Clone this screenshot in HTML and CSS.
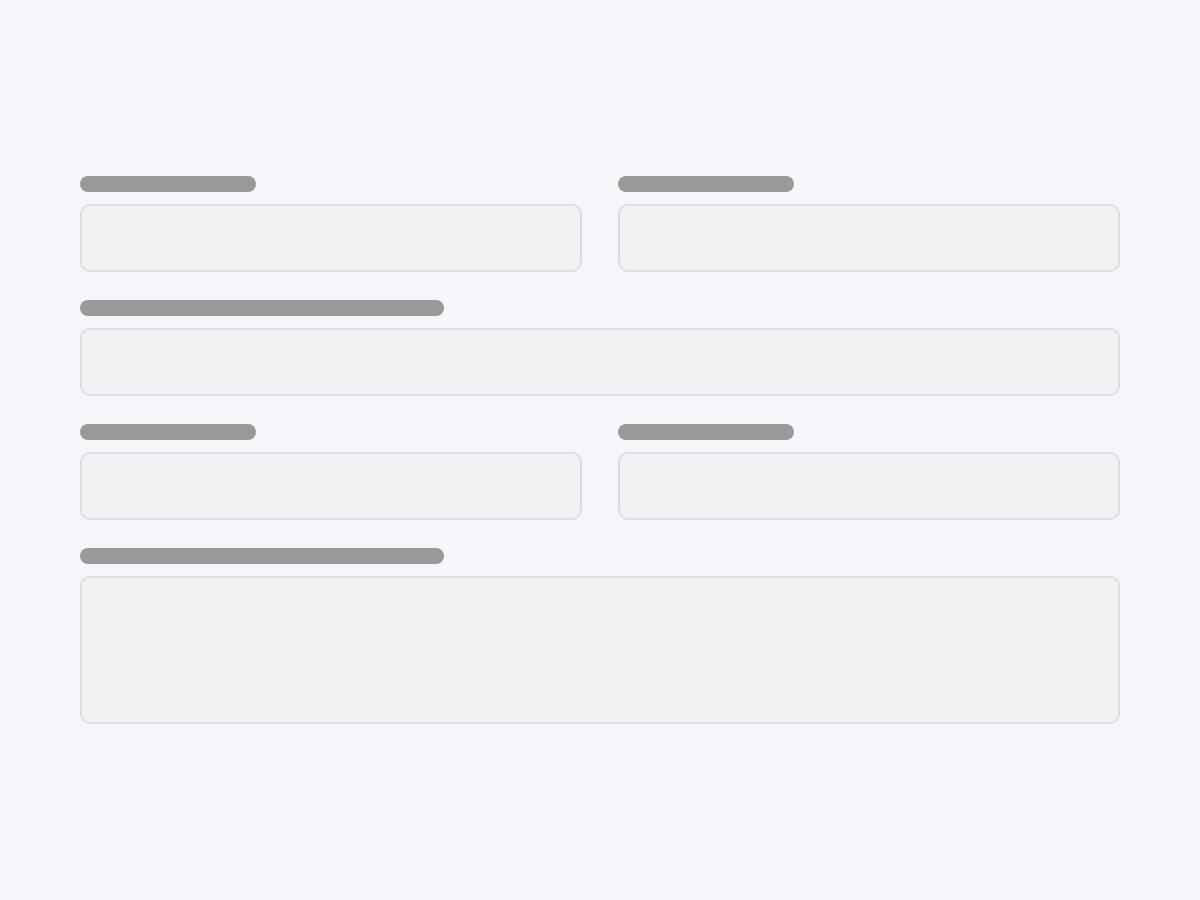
FILE: index.html
```html
<!DOCTYPE html>
<html>
<head>
<meta charset="utf-8">
<link rel="stylesheet" href="styles.css">
</head>
<body>
<form class="form">
  <div class="row two">
    <div class="field"><div class="label short"></div><div class="input"></div></div>
    <div class="field"><div class="label short"></div><div class="input"></div></div>
  </div>
  <div class="field"><div class="label long"></div><div class="input"></div></div>
  <div class="row two">
    <div class="field"><div class="label short"></div><div class="input"></div></div>
    <div class="field"><div class="label short"></div><div class="input"></div></div>
  </div>
  <div class="field"><div class="label long"></div><div class="input area"></div></div>
</form>
</body>
</html>
```
FILE: styles.css
```css
html, body {
  margin: 0;
  padding: 0;
  background: #f4f6fa;
  font-family: "Liberation Sans", Arial, sans-serif;
}
.form {
  width: 1040px;
  margin: 176px auto 0;
  display: flex;
  flex-direction: column;
  gap: 28px;
}
.row.two {
  display: grid;
  grid-template-columns: 1fr 1fr;
  gap: 36px;
}
.field {
  display: flex;
  flex-direction: column;
  gap: 12px;
}
.label {
  height: 16px;
  border-radius: 8px;
  background: #999999;
}
.label.short { width: 176px; }
.label.long { width: 364px; }
.input {
  height: 68px;
  box-sizing: border-box;
  border: 2px solid #dedfe2;
  border-radius: 10px;
  background: #f1f2f4;
}
.input.area { height: 148px; }
```
